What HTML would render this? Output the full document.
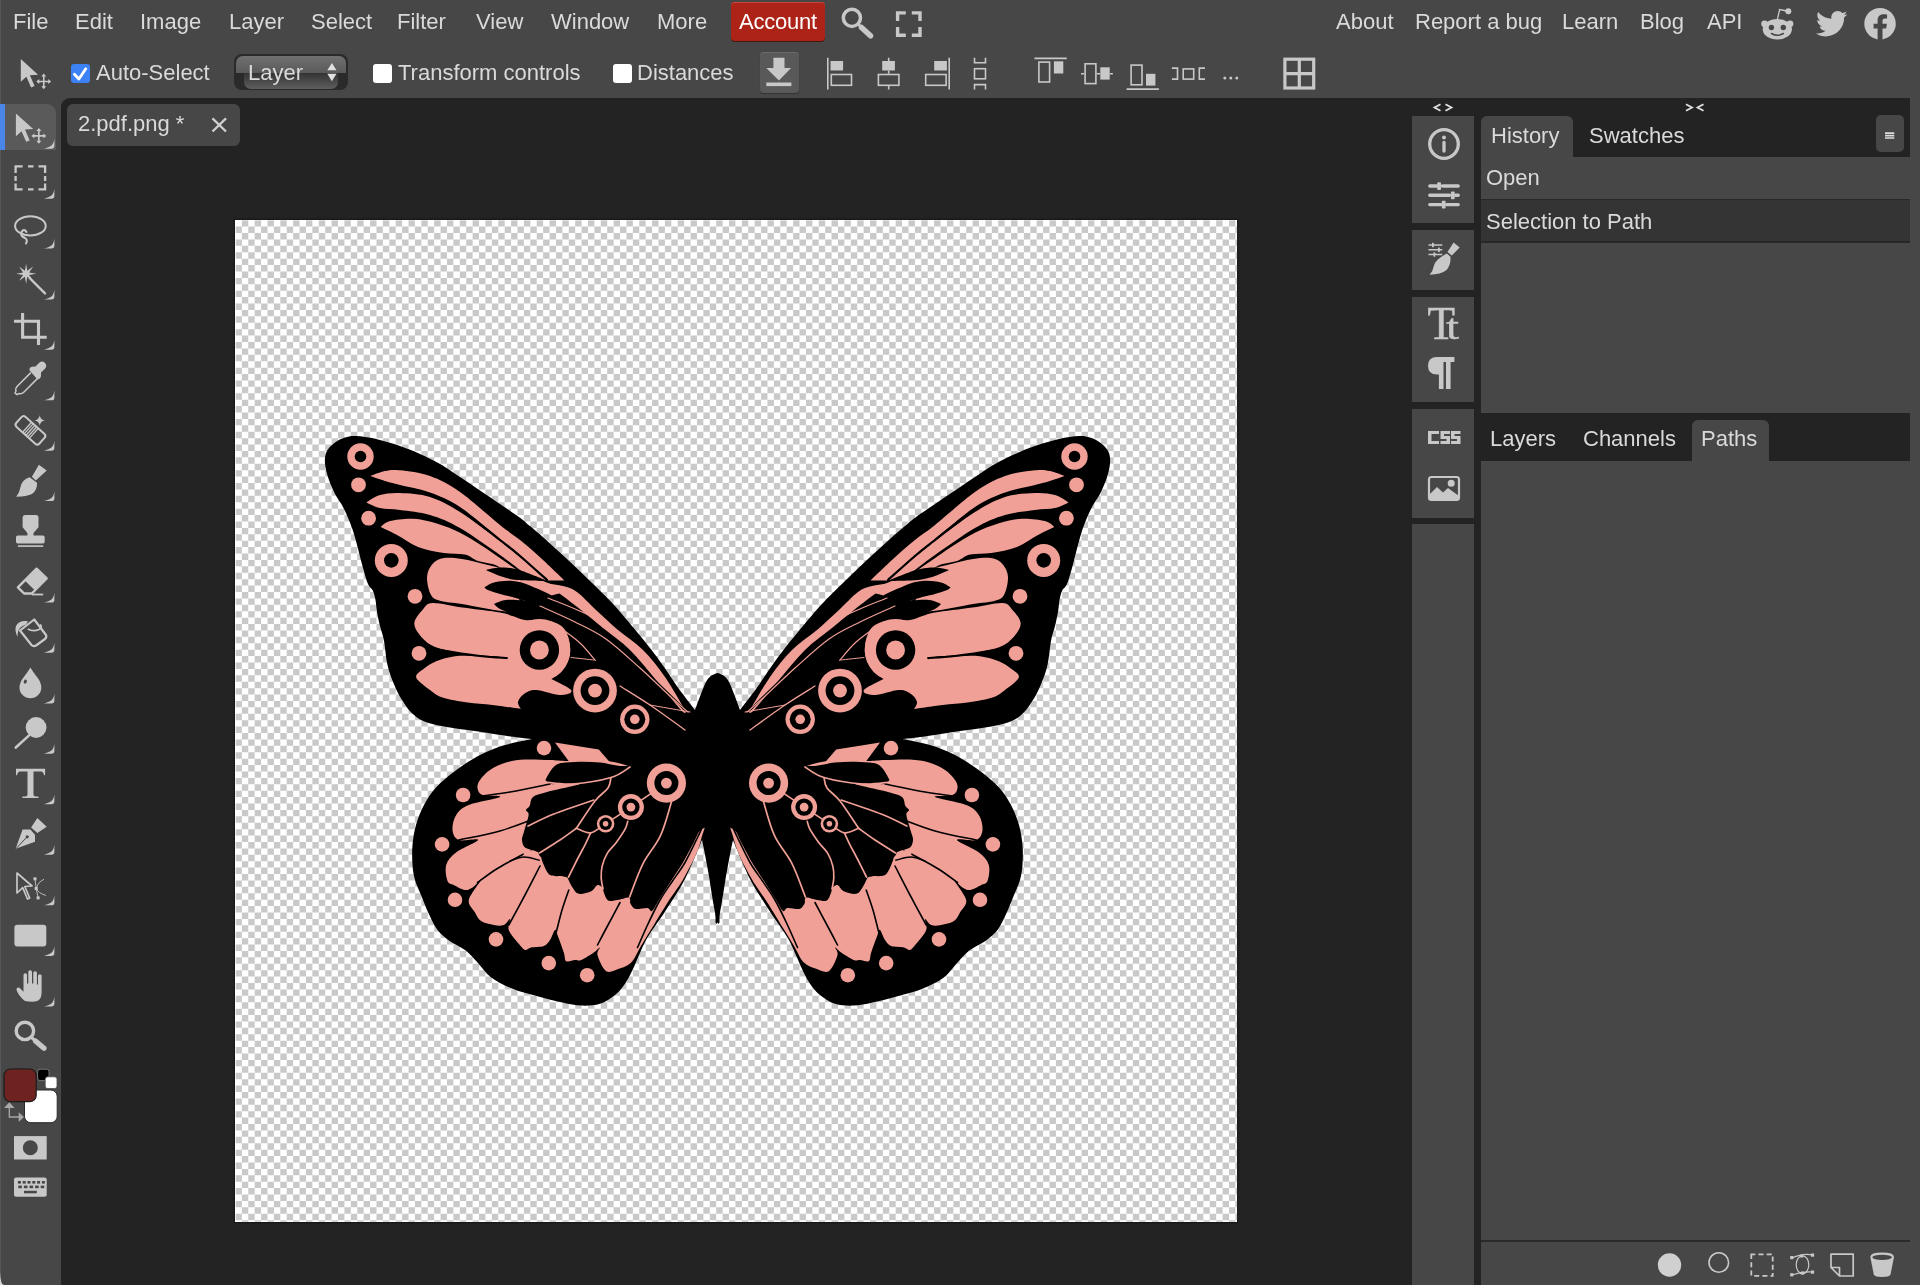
<!DOCTYPE html>
<html><head><meta charset="utf-8">
<style>
html,body{margin:0;padding:0;}
body{width:1920px;height:1285px;overflow:hidden;position:relative;background:#474747;font-family:"Liberation Sans",sans-serif;color:#d8d8d8;}
.a{position:absolute;}
.t{position:absolute;font-size:22px;line-height:22px;white-space:nowrap;color:#dadada;will-change:transform;}
.ic{position:absolute;fill:#c8c8c8;stroke:none;}
</style></head><body>
<!-- dark doc area -->
<div class="a" style="left:61px;top:98px;width:1849px;height:1187px;background:#232323;border-top-left-radius:9px;"></div>
<div class="a" style="left:0;top:0;width:1px;height:1285px;background:#575757;"></div>

<!-- MENU -->
<div class="t" style="left:13px;top:11px">File</div>
<div class="t" style="left:75px;top:11px">Edit</div>
<div class="t" style="left:140px;top:11px">Image</div>
<div class="t" style="left:229px;top:11px">Layer</div>
<div class="t" style="left:311px;top:11px">Select</div>
<div class="t" style="left:397px;top:11px">Filter</div>
<div class="t" style="left:476px;top:11px">View</div>
<div class="t" style="left:551px;top:11px">Window</div>
<div class="t" style="left:657px;top:11px">More</div>
<div class="a" style="left:731px;top:2px;width:94px;height:38.5px;background:#ae2318;border-radius:4px;box-shadow:0 1px 0 #3e1a16, inset 0 1px 0 #c9453a;"></div>
<div class="t" style="left:739px;top:11px;color:#fff;letter-spacing:-0.25px">Account</div>
<div class="t" style="left:1336px;top:11px">About</div>
<div class="t" style="left:1415px;top:11px">Report a bug</div>
<div class="t" style="left:1562px;top:11px">Learn</div>
<div class="t" style="left:1640px;top:11px">Blog</div>
<div class="t" style="left:1707px;top:11px">API</div>

<!-- TOOLBAR ROW -->
<div class="a" style="left:71px;top:64px;width:19px;height:19px;background:#3d82f5;border-radius:3px;"></div>
<div class="t" style="left:96px;top:61.5px">Auto-Select</div>
<div class="a" style="left:234px;top:54px;width:114px;height:36px;background:#2a2a2a;border-radius:8px;"></div><div class="a" style="left:236px;top:55.5px;width:110px;height:17px;background:linear-gradient(#707070,#5a5a5a);border-radius:7px 7px 0 0;"></div><div class="a" style="left:244px;top:72.5px;width:94px;height:16.5px;background:linear-gradient(#333,#5e5e5e);border-radius:0 0 7px 7px;"></div>
<div class="t" style="left:247.5px;top:61.5px">Layer</div>
<div class="a" style="left:373px;top:64px;width:19px;height:19px;background:#fff;border-radius:3px;"></div>
<div class="t" style="left:398px;top:61.5px">Transform controls</div>
<div class="a" style="left:613px;top:64px;width:19px;height:19px;background:#fff;border-radius:3px;"></div>
<div class="t" style="left:637px;top:61.5px">Distances</div>
<div class="a" style="left:760px;top:52px;width:39px;height:41px;background:#595959;border-radius:4px;box-shadow:0 1px 1px #333, inset 0 1px 0 #6a6a6a;"></div>

<!-- TOOL PANEL selection -->
<div class="a" style="left:0;top:104px;width:5px;height:46px;background:#4a86e8;"></div>
<div class="a" style="left:5px;top:104px;width:51px;height:46px;background:#5a5a5a;border-radius:0 9px 0 0;"></div>

<!-- DOC TAB -->
<div class="a" style="left:67px;top:104px;width:173px;height:42px;background:#474747;border-radius:6px;"></div>
<div class="t" style="left:78px;top:113px">2.pdf.png *</div>

<!-- CANVAS -->
<div class="a" style="left:234.4px;top:219.2px;width:1003.8px;height:1003.6px;background:#181818;box-shadow:0 0 1.5px #1a1a1a;"></div>
<div class="a" style="left:235.45px;top:220.2px;width:1001.8px;height:1001.6px;background:#fff;"></div>

<!--BFLY--><svg class="a" style="left:0;top:0" width="1920" height="1285" viewBox="0 0 1920 1285"><defs><clipPath id="cvc"><rect x="235.45" y="220.20" width="1001.8" height="1001.6"/></clipPath></defs><g clip-path="url(#cvc)" stroke="#c9c9c9" stroke-width="6.41" stroke-dasharray="6.41 6.41" fill="none"><path d="M241.86 223.41 H1237.25 M241.86 236.22 H1237.25 M241.86 249.04 H1237.25 M241.86 261.87 H1237.25 M241.86 274.69 H1237.25 M241.86 287.50 H1237.25 M241.86 300.32 H1237.25 M241.86 313.14 H1237.25 M241.86 325.96 H1237.25 M241.86 338.78 H1237.25 M241.86 351.61 H1237.25 M241.86 364.42 H1237.25 M241.86 377.25 H1237.25 M241.86 390.06 H1237.25 M241.86 402.88 H1237.25 M241.86 415.70 H1237.25 M241.86 428.52 H1237.25 M241.86 441.35 H1237.25 M241.86 454.16 H1237.25 M241.86 466.99 H1237.25 M241.86 479.81 H1237.25 M241.86 492.62 H1237.25 M241.86 505.44 H1237.25 M241.86 518.26 H1237.25 M241.86 531.09 H1237.25 M241.86 543.90 H1237.25 M241.86 556.73 H1237.25 M241.86 569.55 H1237.25 M241.86 582.37 H1237.25 M241.86 595.18 H1237.25 M241.86 608.00 H1237.25 M241.86 620.83 H1237.25 M241.86 633.64 H1237.25 M241.86 646.46 H1237.25 M241.86 659.29 H1237.25 M241.86 672.11 H1237.25 M241.86 684.92 H1237.25 M241.86 697.75 H1237.25 M241.86 710.57 H1237.25 M241.86 723.38 H1237.25 M241.86 736.20 H1237.25 M241.86 749.03 H1237.25 M241.86 761.85 H1237.25 M241.86 774.66 H1237.25 M241.86 787.48 H1237.25 M241.86 800.31 H1237.25 M241.86 813.12 H1237.25 M241.86 825.94 H1237.25 M241.86 838.77 H1237.25 M241.86 851.59 H1237.25 M241.86 864.40 H1237.25 M241.86 877.22 H1237.25 M241.86 890.05 H1237.25 M241.86 902.87 H1237.25 M241.86 915.68 H1237.25 M241.86 928.51 H1237.25 M241.86 941.33 H1237.25 M241.86 954.14 H1237.25 M241.86 966.96 H1237.25 M241.86 979.79 H1237.25 M241.86 992.61 H1237.25 M241.86 1005.42 H1237.25 M241.86 1018.25 H1237.25 M241.86 1031.07 H1237.25 M241.86 1043.88 H1237.25 M241.86 1056.70 H1237.25 M241.86 1069.53 H1237.25 M241.86 1082.35 H1237.25 M241.86 1095.16 H1237.25 M241.86 1107.98 H1237.25 M241.86 1120.81 H1237.25 M241.86 1133.62 H1237.25 M241.86 1146.44 H1237.25 M241.86 1159.27 H1237.25 M241.86 1172.09 H1237.25 M241.86 1184.90 H1237.25 M241.86 1197.72 H1237.25 M241.86 1210.55 H1237.25 M241.86 1223.37 H1237.25"/><path d="M235.45 229.81 H1237.25 M235.45 242.63 H1237.25 M235.45 255.45 H1237.25 M235.45 268.27 H1237.25 M235.45 281.09 H1237.25 M235.45 293.91 H1237.25 M235.45 306.74 H1237.25 M235.45 319.56 H1237.25 M235.45 332.38 H1237.25 M235.45 345.19 H1237.25 M235.45 358.01 H1237.25 M235.45 370.83 H1237.25 M235.45 383.65 H1237.25 M235.45 396.48 H1237.25 M235.45 409.29 H1237.25 M235.45 422.12 H1237.25 M235.45 434.94 H1237.25 M235.45 447.75 H1237.25 M235.45 460.57 H1237.25 M235.45 473.39 H1237.25 M235.45 486.21 H1237.25 M235.45 499.03 H1237.25 M235.45 511.86 H1237.25 M235.45 524.67 H1237.25 M235.45 537.50 H1237.25 M235.45 550.32 H1237.25 M235.45 563.13 H1237.25 M235.45 575.95 H1237.25 M235.45 588.77 H1237.25 M235.45 601.60 H1237.25 M235.45 614.41 H1237.25 M235.45 627.24 H1237.25 M235.45 640.06 H1237.25 M235.45 652.88 H1237.25 M235.45 665.69 H1237.25 M235.45 678.51 H1237.25 M235.45 691.34 H1237.25 M235.45 704.15 H1237.25 M235.45 716.98 H1237.25 M235.45 729.80 H1237.25 M235.45 742.62 H1237.25 M235.45 755.43 H1237.25 M235.45 768.26 H1237.25 M235.45 781.08 H1237.25 M235.45 793.89 H1237.25 M235.45 806.71 H1237.25 M235.45 819.54 H1237.25 M235.45 832.36 H1237.25 M235.45 845.17 H1237.25 M235.45 857.99 H1237.25 M235.45 870.82 H1237.25 M235.45 883.63 H1237.25 M235.45 896.45 H1237.25 M235.45 909.28 H1237.25 M235.45 922.10 H1237.25 M235.45 934.91 H1237.25 M235.45 947.73 H1237.25 M235.45 960.56 H1237.25 M235.45 973.38 H1237.25 M235.45 986.19 H1237.25 M235.45 999.02 H1237.25 M235.45 1011.84 H1237.25 M235.45 1024.65 H1237.25 M235.45 1037.47 H1237.25 M235.45 1050.30 H1237.25 M235.45 1063.12 H1237.25 M235.45 1075.93 H1237.25 M235.45 1088.76 H1237.25 M235.45 1101.58 H1237.25 M235.45 1114.39 H1237.25 M235.45 1127.21 H1237.25 M235.45 1140.04 H1237.25 M235.45 1152.86 H1237.25 M235.45 1165.67 H1237.25 M235.45 1178.50 H1237.25 M235.45 1191.32 H1237.25 M235.45 1204.13 H1237.25 M235.45 1216.95 H1237.25"/></g><g id="bh"><path d="M719.5 673.5 C719.5 673.5 718.8 673.2 717.5 673.5 C716.2 673.8 713.4 674.1 711.5 675.5 C709.6 676.9 707.8 678.8 706.0 682.0 C704.2 685.2 702.4 690.3 700.6 695.0 C698.8 699.7 695.0 710.0 695.0 710.0 C695.0 710.0 684.2 696.2 679.0 689.0 C673.8 681.8 668.8 673.8 664.0 667.0 C659.2 660.2 654.5 653.8 650.0 648.0 C645.5 642.2 643.0 639.2 637.0 632.0 C631.0 624.8 621.8 613.5 614.0 605.0 C606.2 596.5 597.8 588.7 590.0 581.0 C582.2 573.3 574.5 566.0 567.0 559.0 C559.5 552.0 551.2 544.5 545.0 539.0 C538.8 533.5 534.2 529.6 530.0 526.1 C525.8 522.6 525.0 521.4 520.0 517.7 C515.0 514.0 510.0 510.8 500.0 504.0 C490.0 497.2 470.0 483.7 460.0 477.0 C450.0 470.3 446.7 467.8 440.0 464.0 C433.3 460.2 426.7 457.0 420.0 454.0 C413.3 451.0 407.3 448.5 400.0 446.0 C392.7 443.5 383.3 440.7 376.0 439.0 C368.7 437.3 361.2 436.2 356.0 436.0 C350.8 435.8 348.5 436.4 345.0 437.5 C341.5 438.6 337.9 440.4 335.0 442.5 C332.1 444.6 329.2 447.4 327.5 450.0 C325.8 452.6 325.3 455.0 325.0 458.0 C324.7 461.0 324.9 464.3 325.6 468.0 C326.3 471.7 327.4 475.7 329.0 480.0 C330.6 484.3 332.8 489.7 335.0 494.0 C337.2 498.3 340.0 501.2 342.5 506.0 C345.0 510.8 347.9 517.2 350.0 522.5 C352.1 527.8 353.5 532.5 355.0 537.5 C356.5 542.5 357.7 547.4 359.0 552.5 C360.3 557.6 361.5 562.8 363.0 568.0 C364.5 573.2 366.3 580.2 368.0 584.0 C369.7 587.8 371.8 588.3 373.0 591.0 C374.2 593.7 374.8 596.5 375.5 600.0 C376.2 603.5 376.2 607.7 377.0 612.0 C377.8 616.3 378.8 621.2 380.0 626.0 C381.2 630.8 382.8 634.5 384.0 641.0 C385.2 647.5 385.9 657.9 387.5 665.0 C389.1 672.1 391.5 678.1 393.8 683.8 C396.0 689.4 398.3 694.0 401.2 698.8 C404.2 703.5 407.5 708.8 411.2 712.5 C415.0 716.2 418.5 719.0 423.8 721.2 C429.0 723.5 435.2 724.8 442.5 726.2 C449.8 727.7 459.2 728.8 467.5 730.0 C475.8 731.2 484.2 732.5 492.5 733.8 C500.8 735.0 510.8 736.6 517.5 737.5 C524.2 738.4 532.5 739.0 532.5 739.0 C532.5 739.0 513.8 742.3 505.0 745.0 C496.2 747.7 488.3 750.7 480.0 755.0 C471.7 759.3 462.3 765.6 455.0 771.0 C447.7 776.4 441.2 781.8 436.0 787.5 C430.8 793.2 427.3 798.8 424.0 805.0 C420.7 811.2 417.9 818.3 416.0 825.0 C414.1 831.7 413.1 838.3 412.5 845.0 C411.9 851.7 412.1 859.2 412.5 865.0 C412.9 870.8 413.6 875.0 415.0 880.0 C416.4 885.0 418.7 889.4 421.0 895.0 C423.3 900.6 426.0 907.9 428.8 913.8 C431.5 919.6 434.0 925.4 437.5 930.0 C441.0 934.6 445.4 937.9 450.0 941.2 C454.6 944.6 460.4 946.5 465.0 950.0 C469.6 953.5 473.1 957.9 477.5 962.5 C481.9 967.1 485.4 973.1 491.2 977.5 C497.1 981.9 504.8 985.6 512.5 988.8 C520.2 991.9 529.2 994.0 537.5 996.2 C545.8 998.5 555.2 1000.9 562.5 1002.5 C569.8 1004.1 575.0 1005.4 581.2 1005.6 C587.5 1005.8 594.4 1005.5 600.0 1003.8 C605.6 1002.0 610.8 998.3 615.0 995.0 C619.2 991.7 622.1 987.9 625.0 983.8 C627.9 979.6 630.0 975.1 632.5 970.0 C635.0 964.9 637.5 958.4 640.0 953.0 C642.5 947.6 643.2 944.7 647.5 937.5 C651.8 930.3 659.8 919.8 666.0 910.0 C672.2 900.2 679.0 890.7 685.0 879.0 C691.0 867.3 702.0 840.0 702.0 840.0 C702.0 840.0 703.4 846.2 704.5 852.0 C705.6 857.8 707.2 866.0 708.8 875.0 C710.3 884.0 712.3 898.1 713.8 906.0 C715.2 913.9 716.5 919.8 717.5 922.5 C718.5 925.2 719.5 922.5 719.5 922.5 C719.5 922.5 719.5 673.5 719.5 673.5Z" fill="#000"/>
<path d="M370.5 476.0 C370.5 476.0 380.1 471.9 385.0 471.0 C389.9 470.1 392.5 469.5 400.0 470.3 C407.5 471.1 420.0 472.4 430.0 476.0 C440.0 479.6 448.3 483.8 460.0 492.0 C471.7 500.2 490.0 517.0 500.0 525.0 C510.0 533.0 512.8 534.2 520.0 540.0 C527.2 545.8 535.6 553.2 543.0 560.0 C550.4 566.8 564.5 580.5 564.5 580.5 C564.5 580.5 548.0 580.5 548.0 580.5 C548.0 580.5 528.0 561.9 520.0 555.0 C512.0 548.1 510.0 547.0 500.0 539.0 C490.0 531.0 471.7 514.8 460.0 507.0 C448.3 499.2 440.0 496.2 430.0 492.5 C420.0 488.8 407.5 486.9 400.0 485.0 C392.5 483.1 389.9 482.5 385.0 481.0 C380.1 479.5 370.5 476.0 370.5 476.0Z" fill="#f0a096"/>
<path d="M366.5 502.5 C366.5 502.5 374.4 496.6 380.0 495.0 C385.6 493.4 391.7 492.7 400.0 493.0 C408.3 493.3 420.0 493.8 430.0 497.0 C440.0 500.2 448.3 504.7 460.0 512.0 C471.7 519.3 490.0 533.5 500.0 541.0 C510.0 548.5 512.0 550.4 520.0 557.0 C528.0 563.6 548.0 580.5 548.0 580.5 C548.0 580.5 534.7 578.8 530.0 577.0 C525.3 575.2 525.0 573.7 520.0 570.0 C515.0 566.3 510.0 562.0 500.0 555.0 C490.0 548.0 471.7 534.7 460.0 528.0 C448.3 521.3 440.0 518.0 430.0 515.0 C420.0 512.0 408.3 511.2 400.0 510.0 C391.7 508.8 385.6 509.2 380.0 508.0 C374.4 506.8 366.5 502.5 366.5 502.5Z" fill="#f0a096"/>
<path d="M380.7 527.0 C380.7 527.0 384.6 522.4 390.0 521.0 C395.4 519.6 405.6 518.3 413.4 518.7 C421.2 519.1 429.0 521.1 436.8 523.4 C444.6 525.7 452.3 528.8 460.1 532.7 C467.9 536.6 476.5 542.3 483.5 546.8 C490.5 551.3 495.6 555.2 502.0 559.6 C508.4 564.0 514.5 568.3 522.0 573.0 C529.5 577.7 547.3 586.5 547.0 588.0 C546.7 589.5 528.2 585.7 520.0 582.0 C511.8 578.3 504.5 569.5 497.5 566.0 C490.5 562.5 483.4 562.9 478.0 561.0 C472.6 559.1 470.5 555.8 464.8 554.5 C459.1 553.2 451.6 554.2 443.8 553.0 C436.0 551.8 425.8 550.0 418.0 547.0 C410.2 544.0 403.2 538.3 397.0 535.0 C390.8 531.7 380.7 527.0 380.7 527.0Z" fill="#f0a096"/>
<path d="M543.9 583.0 C543.9 583.0 557.5 584.5 563.0 586.0 C568.5 587.5 571.5 588.0 577.0 592.0 C582.5 596.0 589.2 603.7 596.0 610.0 C602.8 616.3 610.2 623.3 618.0 630.0 C625.8 636.7 635.2 642.2 643.0 650.0 C650.8 657.8 657.8 666.7 665.0 677.0 C672.2 687.3 686.0 712.0 686.0 712.0 C686.0 712.0 686.0 715.3 681.0 710.0 C676.0 704.7 664.5 690.0 656.0 680.0 C647.5 670.0 638.8 658.7 630.0 650.0 C621.2 641.3 611.2 634.7 603.0 628.0 C594.8 621.3 588.8 616.2 581.0 610.0 C573.2 603.8 562.2 595.5 556.0 591.0 C549.8 586.5 543.9 583.0 543.9 583.0Z" fill="#f0a096"/>
<path d="M427.0 577.0 C427.2 571.8 429.7 567.2 432.5 564.0 C435.3 560.8 439.1 558.8 444.0 558.0 C448.9 557.2 454.7 557.8 462.0 559.0 C469.3 560.2 478.3 562.7 488.0 565.0 C497.7 567.3 510.0 570.0 520.0 573.0 C530.0 576.0 540.5 579.8 548.0 583.0 C555.5 586.2 565.0 592.0 565.0 592.0 C565.0 592.0 551.7 595.0 545.0 598.0 C538.3 601.0 532.2 607.8 525.0 610.0 C517.8 612.2 512.5 612.0 502.0 611.0 C491.5 610.0 472.2 605.7 462.0 604.0 C451.8 602.3 446.2 602.5 441.0 601.0 C435.8 599.5 433.3 599.0 431.0 595.0 C428.7 591.0 426.8 582.2 427.0 577.0Z" fill="#f0a096"/>
<path d="M414.4 622.5 C415.0 618.5 419.5 613.2 422.5 610.0 C425.5 606.8 425.8 603.4 432.5 603.0 C439.2 602.6 451.2 605.9 462.5 607.5 C473.8 609.1 491.7 611.1 500.0 612.5 C508.3 613.9 508.3 614.8 512.5 616.0 C516.7 617.2 519.8 619.3 525.0 620.0 C530.2 620.7 538.2 619.2 544.0 620.0 C549.8 620.8 556.1 622.5 560.0 625.0 C563.9 627.5 565.8 630.8 567.5 635.0 C569.2 639.2 570.2 645.0 570.0 650.0 C569.8 655.0 568.3 660.7 566.0 665.0 C563.7 669.3 560.3 673.1 556.0 676.0 C551.7 678.9 545.2 681.8 540.0 682.5 C534.8 683.2 530.7 683.9 525.0 680.0 C519.3 676.1 514.3 663.2 506.0 659.0 C497.7 654.8 484.3 656.3 475.0 655.0 C465.7 653.7 457.3 652.7 450.0 651.0 C442.7 649.3 436.2 647.8 431.0 645.0 C425.8 642.2 421.8 637.8 419.0 634.0 C416.2 630.2 413.8 626.5 414.4 622.5Z" fill="#f0a096"/>
<circle cx="539.4" cy="650.0" r="31.0" fill="#f0a096"/>
<path d="M416.2 677.5 C415.2 674.0 420.4 671.5 423.8 668.8 C427.1 666.0 431.0 663.3 436.2 661.2 C441.5 659.2 447.7 657.1 455.0 656.2 C462.3 655.4 471.7 655.8 480.0 656.2 C488.3 656.7 497.5 656.8 505.0 658.8 C512.5 660.7 518.3 665.1 525.0 668.0 C531.7 670.9 537.3 672.3 545.0 676.0 C552.7 679.7 568.5 686.8 571.0 690.0 C573.5 693.2 565.8 695.0 560.0 695.0 C554.2 695.0 542.0 690.2 536.0 690.0 C530.0 689.8 527.0 692.0 524.0 694.0 C521.0 696.0 518.5 699.5 518.0 702.0 C517.5 704.5 521.0 709.0 521.0 709.0 C521.0 709.0 501.4 706.1 492.5 705.0 C483.6 703.9 475.8 703.8 467.5 702.5 C459.2 701.2 448.8 699.6 442.5 697.5 C436.2 695.4 434.4 693.3 430.0 690.0 C425.6 686.7 417.3 681.0 416.2 677.5Z" fill="#f0a096"/>
<path d="M405.0 643.0 C410.8 644.2 427.5 647.8 440.0 650.0 C452.5 652.2 468.8 654.7 480.0 656.0 C491.2 657.3 502.5 657.7 507.0 658.0" fill="none" stroke="#000" stroke-width="1.8" stroke-linecap="round"/>
<path d="M486.0 570.0 C486.0 570.0 494.5 567.5 500.0 567.5 C505.5 567.5 511.1 567.8 519.0 570.0 C526.9 572.2 547.5 581.0 547.5 581.0 C547.5 581.0 525.4 580.8 517.5 580.0 C509.6 579.2 505.2 577.7 500.0 576.0 C494.8 574.3 486.0 570.0 486.0 570.0Z" fill="#000"/>
<path d="M484.5 587.5 C484.5 587.5 489.3 583.6 494.0 582.5 C498.7 581.4 506.3 580.4 512.5 581.0 C518.7 581.6 522.7 582.4 531.0 586.0 C539.3 589.6 550.6 593.7 562.5 602.5 C574.4 611.3 602.5 639.0 602.5 639.0 C602.5 639.0 589.8 639.0 581.0 635.0 C572.2 631.0 559.3 620.7 550.0 615.0 C540.7 609.3 533.3 604.5 525.0 601.0 C516.7 597.5 506.2 595.8 500.0 594.0 C493.8 592.2 490.6 591.1 488.0 590.0 C485.4 588.9 484.5 587.5 484.5 587.5Z" fill="#000"/>
<path d="M494.0 604.0 C494.0 604.0 500.8 600.5 506.0 600.0 C511.2 599.5 517.7 600.3 525.0 601.0 C532.3 601.7 541.7 602.2 550.0 604.0 C558.3 605.8 573.3 609.8 575.0 612.0 C576.7 614.2 565.8 615.9 560.0 617.0 C554.2 618.1 545.8 618.2 540.0 618.5 C534.2 618.8 529.6 619.8 525.0 619.0 C520.4 618.2 516.7 615.7 512.5 614.0 C508.3 612.3 503.1 610.7 500.0 609.0 C496.9 607.3 494.0 604.0 494.0 604.0Z" fill="#000"/>
<path d="M395.0 490.0 C400.8 490.8 419.2 491.2 430.0 494.5 C440.8 497.8 448.3 501.9 460.0 509.5 C471.7 517.1 490.0 532.2 500.0 540.0 C510.0 547.8 512.2 549.3 520.0 556.0 C527.8 562.7 542.5 576.0 547.0 580.0" fill="none" stroke="#000" stroke-width="2.2" stroke-linecap="round"/>
<path d="M520.0 600.0 C526.7 603.0 546.7 611.5 560.0 618.0 C573.3 624.5 586.7 630.8 600.0 639.0 C613.3 647.2 625.0 654.3 640.0 667.0 C655.0 679.7 681.7 707.0 690.0 715.0" fill="none" stroke="#000" stroke-width="2.0" stroke-linecap="round"/>
<circle cx="360.5" cy="456.5" r="13.2" fill="#f0a096"/>
<circle cx="360.5" cy="456.5" r="5.8" fill="#000"/>
<circle cx="391.3" cy="560.4" r="16.5" fill="#f0a096"/>
<circle cx="391.3" cy="560.4" r="7.3" fill="#000"/>
<circle cx="358.5" cy="484.8" r="7.4" fill="#f0a096"/>
<circle cx="368.6" cy="518.2" r="7.4" fill="#f0a096"/>
<circle cx="415.0" cy="596.3" r="7.4" fill="#f0a096"/>
<circle cx="419.0" cy="653.3" r="7.4" fill="#f0a096"/>
<circle cx="539.4" cy="650.0" r="19.7" fill="#000"/>
<circle cx="539.4" cy="650.0" r="9.4" fill="#f0a096"/>
<circle cx="595.0" cy="690.6" r="21.9" fill="#f0a096"/>
<circle cx="595.0" cy="690.6" r="14.4" fill="#000"/>
<circle cx="595.0" cy="690.6" r="6.9" fill="#f0a096"/>
<circle cx="634.8" cy="719.3" r="14.7" fill="#f0a096"/>
<circle cx="634.8" cy="719.3" r="10.5" fill="#000"/>
<circle cx="634.8" cy="719.3" r="4.8" fill="#f0a096"/>
<path d="M620.0 686.0 C625.0 689.2 639.2 697.7 650.0 705.0 C660.8 712.3 679.2 725.8 685.0 730.0" fill="none" stroke="#f0a096" stroke-width="1.3" stroke-linecap="round"/>
<path d="M540.0 606.0 C545.8 608.7 564.0 616.5 575.0 622.0 C586.0 627.5 595.2 631.3 606.0 639.0 C616.8 646.7 629.0 658.2 640.0 668.0 C651.0 677.8 664.0 690.7 672.0 698.0 C680.0 705.3 685.3 709.7 688.0 712.0" fill="none" stroke="#f0a096" stroke-width="1.2" stroke-linecap="round"/>
<path d="M562.5 629.4 C565.4 631.7 574.5 637.9 580.0 643.0 C585.5 648.1 592.8 657.4 595.3 660.3" fill="none" stroke="#f0a096" stroke-width="1.2" stroke-linecap="round"/>
<path d="M571.0 657.5 C574.8 657.9 590.2 659.6 594.0 660.0" fill="none" stroke="#f0a096" stroke-width="1.0" stroke-linecap="round"/>
<path d="M548.0 598.0 C555.0 601.0 577.2 609.0 590.0 616.0 C602.8 623.0 619.2 636.0 625.0 640.0" fill="none" stroke="#f0a096" stroke-width="1.1" stroke-linecap="round"/>
<path d="M650.0 705.0 C656.7 706.2 683.3 710.8 690.0 712.0" fill="none" stroke="#f0a096" stroke-width="1.0" stroke-linecap="round"/>
<path d="M555.0 742.5 L598.8 749.4 L611.2 763.8 L568.8 761.2Z" fill="#f0a096"/>
<path d="M567.5 761.0 C559.2 761.0 557.1 760.2 550.0 760.0 C542.9 759.8 532.3 759.1 525.0 759.5 C517.7 759.9 511.8 760.8 506.0 762.5 C500.2 764.2 494.3 767.1 490.0 770.0 C485.7 772.9 482.1 777.0 480.0 780.0 C477.9 783.0 477.1 785.5 477.5 788.0 C477.9 790.5 478.8 793.5 482.5 795.0 C486.2 796.5 502.3 795.3 500.0 797.0 C497.7 798.7 476.0 802.0 468.8 805.0 C461.5 808.0 459.0 810.8 456.2 815.0 C453.5 819.2 452.1 825.8 452.5 830.0 C452.9 834.2 454.5 838.3 458.8 840.0 C463.0 841.7 478.5 837.9 478.0 840.0 C477.5 842.1 461.3 848.3 456.0 852.5 C450.7 856.7 447.7 860.2 446.2 865.0 C444.8 869.8 446.2 877.7 447.5 881.0 C448.8 884.3 450.8 883.5 453.8 885.0 C456.7 886.5 461.9 889.6 465.0 890.0 C468.1 890.4 469.8 889.2 472.5 887.5 C475.2 885.8 481.6 877.9 481.0 880.0 C480.4 882.1 469.8 894.6 468.8 900.0 C467.8 905.4 473.0 909.0 475.0 912.5 C477.0 916.0 477.9 918.9 481.0 921.0 C484.1 923.1 490.0 924.3 493.8 925.0 C497.5 925.7 501.0 926.0 503.8 925.0 C506.5 924.0 509.2 918.2 510.0 919.0 C510.8 919.8 507.3 925.9 508.8 930.0 C510.2 934.1 516.0 940.4 518.8 943.8 C521.5 947.1 523.0 949.4 525.0 950.0 C527.0 950.6 527.9 948.2 531.0 947.5 C534.1 946.8 540.6 947.2 543.8 946.0 C546.9 944.8 548.1 942.7 550.0 940.0 C551.9 937.3 553.8 930.8 555.0 930.0 C556.2 929.2 556.0 931.2 557.5 935.0 C559.0 938.8 562.3 948.1 563.8 952.5 C565.2 956.9 564.4 960.0 566.2 961.2 C568.1 962.5 572.5 960.2 575.0 960.0 C577.5 959.8 578.1 961.2 581.2 960.0 C584.4 958.8 590.6 954.6 593.8 952.5 C596.9 950.4 599.4 947.1 600.0 947.5 C600.6 947.9 596.5 951.0 597.5 955.0 C598.5 959.0 602.7 969.0 606.2 971.2 C609.8 973.5 614.6 970.2 618.8 968.8 C622.9 967.3 627.5 966.3 631.2 962.5 C635.0 958.7 637.5 951.8 641.0 946.0 C644.5 940.2 647.5 935.3 652.0 928.0 C656.5 920.7 662.5 910.7 668.0 902.0 C673.5 893.3 679.5 886.3 685.0 876.0 C690.5 865.7 698.0 852.7 701.0 840.0 C704.0 827.3 713.2 811.7 703.0 800.0 C692.8 788.3 657.2 776.7 640.0 770.0 C622.8 763.3 612.1 761.5 600.0 760.0 C587.9 758.5 575.8 761.0 567.5 761.0Z" fill="#f0a096"/>
<path d="M545.5 780.0 C545.5 780.0 551.1 768.0 556.0 765.0 C560.9 762.0 567.7 762.4 575.0 762.0 C582.3 761.6 591.7 761.8 600.0 762.5 C608.3 763.2 615.0 766.4 625.0 766.0 C635.0 765.6 645.5 759.3 660.0 760.0 C674.5 760.7 703.3 759.0 712.0 770.0 C720.7 781.0 712.0 826.0 712.0 826.0 C712.0 826.0 703.5 827.3 700.5 830.0 C697.5 832.7 696.9 836.6 694.0 842.0 C691.1 847.4 686.8 856.0 683.0 862.5 C679.2 869.0 675.0 874.8 671.0 881.0 C667.0 887.2 662.2 895.0 659.0 900.0 C655.8 905.0 653.9 909.7 652.0 911.0 C650.1 912.3 650.3 908.4 647.5 908.0 C644.7 907.6 637.9 909.7 635.0 908.8 C632.1 907.8 630.0 902.5 630.0 902.5 C630.0 902.5 630.8 897.9 628.8 897.5 C626.7 897.1 621.0 899.6 617.5 900.0 C614.0 900.4 610.0 902.1 607.5 900.0 C605.0 897.9 602.5 887.5 602.5 887.5 C602.5 887.5 599.4 884.4 597.5 885.0 C595.6 885.6 594.4 889.8 591.2 891.2 C588.1 892.7 581.9 894.4 578.8 893.8 C575.6 893.1 574.4 890.2 572.5 887.5 C570.6 884.8 567.5 877.5 567.5 877.5 C567.5 877.5 565.4 876.7 562.5 876.2 C559.6 875.8 553.1 876.9 550.0 875.0 C546.9 873.1 545.2 867.9 543.8 865.0 C542.3 862.1 541.2 857.5 541.2 857.5 C541.2 857.5 537.7 852.7 535.0 851.0 C532.3 849.3 527.2 849.3 525.0 847.5 C522.8 845.7 522.2 842.5 522.0 840.0 C521.8 837.5 522.6 836.7 523.8 832.5 C524.9 828.3 528.2 818.8 528.6 815.0 C529.0 811.2 525.8 811.5 526.0 810.0 C526.2 808.5 528.5 807.9 529.7 805.7 C530.9 803.5 530.1 799.3 533.0 797.0 C535.9 794.7 539.2 794.2 547.0 792.0 C554.8 789.8 577.8 785.3 580.0 784.0 C582.2 782.7 565.0 784.0 560.0 784.0 C555.0 784.0 552.4 784.4 550.0 783.8 C547.6 783.1 545.5 780.0 545.5 780.0Z" fill="#000"/>
<path d="M482.0 796.0 C486.7 795.3 498.7 794.0 510.0 792.0 C521.3 790.0 543.3 785.3 550.0 784.0" fill="none" stroke="#000" stroke-width="1.6" stroke-linecap="round"/>
<path d="M458.8 840.0 C465.6 838.5 486.9 834.8 500.0 831.0 C513.1 827.2 531.2 819.8 537.5 817.5" fill="none" stroke="#000" stroke-width="1.6" stroke-linecap="round"/>
<path d="M477.5 882.5 C480.4 880.4 489.2 873.8 495.0 870.0 C500.8 866.2 505.8 863.7 512.5 860.0 C519.2 856.3 531.2 850.0 535.0 848.0" fill="none" stroke="#000" stroke-width="1.6" stroke-linecap="round"/>
<path d="M508.8 925.0 C511.5 920.0 519.8 904.8 525.0 895.0 C530.2 885.2 537.5 870.8 540.0 866.0" fill="none" stroke="#000" stroke-width="1.6" stroke-linecap="round"/>
<path d="M556.2 932.5 C557.2 928.8 559.9 917.1 562.0 910.0 C564.1 902.9 567.6 893.3 568.8 890.0" fill="none" stroke="#000" stroke-width="1.6" stroke-linecap="round"/>
<path d="M597.5 945.0 C599.2 941.7 604.2 932.1 608.0 925.0 C611.8 917.9 618.0 906.2 620.0 902.5" fill="none" stroke="#000" stroke-width="1.6" stroke-linecap="round"/>
<path d="M702.0 828.0 C701.2 829.6 700.3 831.8 697.5 837.5 C694.7 843.2 689.2 855.2 685.0 862.5 C680.8 869.8 676.7 874.8 672.5 881.0 C668.3 887.2 664.2 892.7 660.0 900.0 C655.8 907.3 651.2 917.1 647.5 925.0 C643.8 932.9 639.2 943.8 637.5 947.5" fill="none" stroke="#000" stroke-width="1.6" stroke-linecap="round"/>
<circle cx="544.0" cy="748.1" r="7.3" fill="#f0a096"/>
<circle cx="463.1" cy="795.0" r="7.3" fill="#f0a096"/>
<circle cx="442.1" cy="844.4" r="7.3" fill="#f0a096"/>
<circle cx="455.0" cy="899.8" r="7.3" fill="#f0a096"/>
<circle cx="496.0" cy="939.4" r="7.3" fill="#f0a096"/>
<circle cx="548.8" cy="963.1" r="7.3" fill="#f0a096"/>
<circle cx="587.2" cy="975.2" r="7.3" fill="#f0a096"/>
<path d="M545.0 782.0 C549.6 782.3 561.5 784.8 572.5 784.0 C583.5 783.2 601.4 780.3 611.0 777.5 C620.6 774.7 626.8 768.8 630.0 767.0" fill="none" stroke="#f0a096" stroke-width="1.7" stroke-linecap="round"/>
<path d="M611.0 777.5 C610.5 779.2 610.7 784.1 608.0 788.0 C605.3 791.9 600.3 794.3 595.0 801.0 C589.7 807.7 579.5 823.8 576.4 828.3" fill="none" stroke="#f0a096" stroke-width="1.7" stroke-linecap="round"/>
<path d="M528.0 826.0 C532.3 824.0 542.8 818.3 553.8 814.0 C564.7 809.7 587.1 802.3 593.8 800.0" fill="none" stroke="#f0a096" stroke-width="1.7" stroke-linecap="round"/>
<path d="M576.4 828.3 C578.8 829.0 585.8 833.5 590.6 832.8 C595.4 832.1 602.8 825.4 605.2 823.9" fill="none" stroke="#f0a096" stroke-width="1.7" stroke-linecap="round"/>
<path d="M576.4 828.3 C573.7 830.2 566.2 835.9 560.0 840.0 C553.8 844.1 542.7 850.9 539.2 853.1" fill="none" stroke="#f0a096" stroke-width="1.7" stroke-linecap="round"/>
<path d="M605.6 823.8 C609.8 821.0 620.8 813.9 630.9 807.1 C641.0 800.3 660.5 787.1 666.4 783.1" fill="none" stroke="#f0a096" stroke-width="1.7" stroke-linecap="round"/>
<path d="M590.6 832.8 C589.7 834.7 587.6 839.8 585.3 844.3 C583.0 848.8 579.8 854.5 577.0 860.0 C574.2 865.5 569.9 874.2 568.5 877.0" fill="none" stroke="#f0a096" stroke-width="1.7" stroke-linecap="round"/>
<path d="M627.8 821.3 C627.3 822.6 627.0 825.7 625.1 829.2 C623.2 832.7 619.2 838.5 616.3 842.5 C613.3 846.5 609.8 849.1 607.4 853.1 C605.0 857.1 603.1 862.2 602.1 866.4 C601.1 870.5 601.1 874.2 601.2 878.0 C601.4 881.8 602.7 887.2 603.0 889.0" fill="none" stroke="#f0a096" stroke-width="1.7" stroke-linecap="round"/>
<path d="M672.0 800.0 C670.1 805.9 665.5 824.8 660.6 835.4 C655.8 846.0 648.1 853.5 642.9 863.8 C637.7 874.1 631.8 891.5 629.6 897.0" fill="none" stroke="#f0a096" stroke-width="1.7" stroke-linecap="round"/>
<path d="M523.0 848.5 L538.0 852.0 L540.5 860.0 L524.0 857.0Z" fill="#f0a096"/>
<path d="M510.0 861.0 C512.3 860.3 519.1 857.1 524.0 857.0 C528.9 856.9 536.7 859.7 539.2 860.2" fill="none" stroke="#000" stroke-width="1.5" stroke-linecap="round"/>
<circle cx="666.4" cy="783.1" r="19.6" fill="#f0a096"/>
<circle cx="666.4" cy="783.1" r="12.0" fill="#000"/>
<circle cx="666.4" cy="783.1" r="5.4" fill="#f0a096"/>
<circle cx="630.9" cy="807.1" r="13.0" fill="#f0a096"/>
<circle cx="630.9" cy="807.1" r="8.7" fill="#000"/>
<circle cx="630.9" cy="807.1" r="4.4" fill="#f0a096"/>
<circle cx="605.6" cy="823.8" r="8.8" fill="#f0a096"/>
<circle cx="605.6" cy="823.8" r="6.2" fill="#000"/>
<circle cx="605.6" cy="823.8" r="2.8" fill="#f0a096"/></g><use href="#bh" transform="translate(1435,0) scale(-1,1)"/></svg><!--/BFLY-->
<!-- RIGHT ICON COLUMN -->
<div class="a" style="left:1412px;top:116px;width:62px;height:107px;background:#474747;"></div>
<div class="a" style="left:1412px;top:230px;width:62px;height:60px;background:#474747;"></div>
<div class="a" style="left:1412px;top:297px;width:62px;height:105px;background:#474747;"></div>
<div class="a" style="left:1412px;top:409px;width:62px;height:109px;background:#474747;"></div>
<div class="a" style="left:1412px;top:524px;width:62px;height:761px;background:#474747;"></div>

<!-- RIGHT PANEL 1 -->
<div class="a" style="left:1481px;top:116px;width:92px;height:41px;background:#474747;border-radius:6px 6px 0 0;"></div>
<div class="a" style="left:1876px;top:115px;width:28px;height:37px;background:#474747;border-radius:5px;"></div>
<div class="a" style="left:1481px;top:157px;width:429px;height:256px;background:#474747;"></div>
<div class="a" style="left:1481px;top:198.5px;width:429px;height:44.5px;background:#343434;border-top:1px solid #282828;border-bottom:2px solid #282828;box-sizing:border-box;"></div>
<div class="t" style="left:1491px;top:125px">History</div>
<div class="t" style="left:1589px;top:125px">Swatches</div>
<div class="t" style="left:1486px;top:167px">Open</div>
<div class="t" style="left:1486px;top:211px">Selection to Path</div>

<!-- RIGHT PANEL 2 -->
<div class="a" style="left:1692px;top:420px;width:77px;height:42px;background:#474747;border-radius:6px 6px 0 0;"></div>
<div class="a" style="left:1481px;top:461px;width:429px;height:824px;background:#474747;"></div>
<div class="a" style="left:1481px;top:1240px;width:429px;height:2px;background:#2a2a2a;"></div>
<div class="t" style="left:1490px;top:428px">Layers</div>
<div class="t" style="left:1583px;top:428px">Channels</div>
<div class="t" style="left:1700.5px;top:428px">Paths</div>

<!--UI--><svg class="a" style="left:0;top:0" width="1920" height="1285" viewBox="0 0 1920 1285"><circle cx="851.9" cy="17.8" r="8.6" fill="none" stroke="#c8c8c8" stroke-width="3.5"/><path d="M858.5 24.5 L871 36" stroke="#c8c8c8" stroke-width="3" stroke-linecap="round"/><path d="M861.5 27.5 L870.5 35.8" stroke="#c8c8c8" stroke-width="5.5" stroke-linecap="round"/><path d="M897.6 21 V12.9 H905.8 M911.8 12.9 H920 V21 M920 27 V35.3 H911.8 M905.8 35.3 H897.6 V27" fill="none" stroke="#c8c8c8" stroke-width="3.4"/><g fill="#c8c8c8"><ellipse cx="1777.3" cy="29.3" rx="14.6" ry="10.3"/><circle cx="1764.6" cy="23.8" r="3.4"/><circle cx="1790" cy="23.8" r="3.4"/><circle cx="1788.3" cy="11.3" r="3"/></g><path d="M1777.4 19.5 L1779.6 9.5 L1787 11" fill="none" stroke="#c8c8c8" stroke-width="1.3"/><g fill="#474747"><circle cx="1771.4" cy="27.5" r="2.7"/><circle cx="1783.3" cy="27.5" r="2.7"/></g><path d="M1771.5 33.5 Q1777.4 37 1783.3 33.5" fill="none" stroke="#474747" stroke-width="1.5" stroke-linecap="round"/><path transform="translate(1816,8) scale(0.0612)" fill="#c8c8c8" d="M459.37 151.716c.325 4.548.325 9.097.325 13.645 0 138.72-105.583 298.558-298.558 298.558-59.452 0-114.68-17.219-161.137-47.106 8.447.974 16.568 1.299 25.34 1.299 49.055 0 94.213-16.568 130.274-44.832-46.132-.975-84.792-31.188-98.112-72.772 6.498.974 12.995 1.624 19.818 1.624 9.421 0 18.843-1.3 27.614-3.573-48.081-9.747-84.143-51.98-84.143-102.985v-1.299c13.969 7.797 30.214 12.67 47.431 13.319-28.264-18.843-46.781-51.005-46.781-87.391 0-19.492 5.197-37.36 14.294-52.954 51.655 63.675 129.3 105.258 216.365 109.807-1.624-7.797-2.599-15.918-2.599-24.04 0-57.828 46.782-104.934 104.934-104.934 30.213 0 57.502 12.67 76.67 33.137 23.715-4.548 46.456-13.32 66.599-25.34-7.798 24.366-22.665 44.833-42.158 58.802 18.843-1.624 37.36-6.822 54.578-14.294-12.992 18.843-29.237 35.735-47.754 49.704z"/><path transform="translate(1863.8,7.6) scale(0.0635)" fill="#c8c8c8" d="M504 256C504 119 393 8 256 8S8 119 8 256c0 123.78 90.69 226.38 209.25 245V327.69h-63V256h63v-54.64c0-62.15 37-96.48 93.67-96.48 27.14 0 55.52 4.84 55.52 4.84v61h-31.28c-30.8 0-40.410 19.12-40.41 38.73V256h68.78l-11 71.69h-57.78V501C413.31 482.38 504 379.78 504 256z"/><g transform="translate(0,0)" fill="#c8c8c8"><path d="M20.8 59 L38.1 74.7 L29.9 75.2 L34.6 86 L31.1 87.4 L26.4 76.8 L20.8 81.8Z"/><path d="M43.75 75 V88 M37.5 81.5 H50" stroke="#c8c8c8" stroke-width="1.6"/><path d="M43.75 73.6 L41.3 76.6 H46.2Z M43.75 89.3 L41.3 86.3 H46.2Z M36.3 81.5 L39.3 79.1 V83.9Z M51.2 81.5 L48.2 79.1 V83.9Z"/></g><path d="M74.4 74.2 L78.9 79 L85.8 68.8" fill="none" stroke="#fff" stroke-width="2.8" stroke-linecap="round" stroke-linejoin="round"/><path d="M331.9 62.9 L336.5 70.3 H327.3Z M331.9 81.3 L336.5 73.8 H327.3Z" fill="#e0e0e0"/><path d="M773.4 57.7 H784.5 V68.1 H791 L778.9 80.5 L766.3 68.1 H773.4Z" fill="#c8c8c8"/><rect x="766.3" y="82.5" width="25.1" height="3.6" fill="#c8c8c8"/><g fill="none" stroke="#c8c8c8" stroke-width="1.6"><path d="M827.8 57.7 V89.6"/><rect x="831.3" y="74.5" width="20.2" height="10.8"/></g><rect x="830.5" y="61" width="12.6" height="9.5" fill="#c8c8c8"/><g fill="none" stroke="#c8c8c8" stroke-width="1.6"><path d="M888.7 57.7 V61 M888.7 70.5 V73.7 M888.7 86 V89.6"/><rect x="878.4" y="74.5" width="20.5" height="10.8"/></g><rect x="882.2" y="61" width="12.7" height="9.5" fill="#c8c8c8"/><g fill="none" stroke="#c8c8c8" stroke-width="1.6"><path d="M949.2 57.7 V89.6"/><rect x="925.7" y="74.5" width="20.4" height="10.8"/></g><rect x="934.2" y="61" width="12.7" height="9.5" fill="#c8c8c8"/><g fill="none" stroke="#c8c8c8" stroke-width="1.6"><path d="M974.5 57.7 V62.8 H985.5 V57.7 M974.5 89.6 V84.6 H985.5 V89.6"/><rect x="974.5" y="68.7" width="11" height="10.1"/></g><g fill="none" stroke="#c8c8c8" stroke-width="1.6"><path d="M1034.5 58.4 H1066.8"/><rect x="1038.9" y="62.1" width="10.7" height="19.9"/></g><rect x="1053.9" y="61.3" width="9.4" height="12.2" fill="#c8c8c8"/><g fill="none" stroke="#c8c8c8" stroke-width="1.6"><path d="M1081 73.8 H1084.3 M1096.7 73.8 H1100.3 M1109.7 73.8 H1112.9"/><rect x="1085.1" y="63.8" width="10.8" height="19.8"/></g><rect x="1100.3" y="67.3" width="9.4" height="12.3" fill="#c8c8c8"/><g fill="none" stroke="#c8c8c8" stroke-width="1.6"><path d="M1126.6 89.1 H1158.9"/><rect x="1131.1" y="65.1" width="10.9" height="19.7"/></g><rect x="1146" y="73.8" width="9.4" height="11.8" fill="#c8c8c8"/><g fill="none" stroke="#c8c8c8" stroke-width="1.6"><path d="M1171.9 68.1 H1177.5 V79.1 H1171.9 M1205 68.1 H1199.3 V79.1 H1205"/><rect x="1183.2" y="68.9" width="10.5" height="10.2"/></g><g fill="#c8c8c8"><circle cx="1224.8" cy="78" r="1.5"/><circle cx="1230.8" cy="78" r="1.5"/><circle cx="1236.8" cy="78" r="1.5"/></g><g fill="none" stroke="#c8c8c8" stroke-width="3.2"><rect x="1284.9" y="59.2" width="28.8" height="28.8"/><path d="M1299.3 59.2 V88 M1284.9 73.6 H1313.7"/></g><g transform="translate(-4.9,54.4)" fill="#c8c8c8"><path d="M20.8 59 L38.1 74.7 L29.9 75.2 L34.6 86 L31.1 87.4 L26.4 76.8 L20.8 81.8Z"/><path d="M43.75 75 V88 M37.5 81.5 H50" stroke="#c8c8c8" stroke-width="1.6"/><path d="M43.75 73.6 L41.3 76.6 H46.2Z M43.75 89.3 L41.3 86.3 H46.2Z M36.3 81.5 L39.3 79.1 V83.9Z M51.2 81.5 L48.2 79.1 V83.9Z"/></g><path d="M54.4 139 L54.4 145.8 Q54.4 148.7 51.4 148.7 L44 148.7 Q50.3 147.2 52.4 144.6 Q53.9 142.6 54.4 139Z" fill="#c8c8c8"/><g fill="none" stroke="#c8c8c8" stroke-width="2.3"><path d="M15.6 173 V166.4 H22.6 M28 166.4 H33.5 M38.5 166.4 H45.1 V173 M45.1 176 V181 M45.1 183.5 V189.3 H38.5 M33.5 189.3 H28 M22.6 189.3 H15.6 V183.5 M15.6 181 V176"/></g><path d="M54.4 189 L54.4 195.8 Q54.4 198.7 51.4 198.7 L44 198.7 Q50.3 197.2 52.4 194.6 Q53.9 192.6 54.4 189Z" fill="#c8c8c8"/><ellipse cx="30.4" cy="225.9" rx="15.3" ry="9.6" fill="none" stroke="#c8c8c8" stroke-width="2"/><path d="M26.5 232 Q24 228 21.5 232 Q20 236 25 238 Q28 240 26 243.5" fill="none" stroke="#c8c8c8" stroke-width="2" stroke-linecap="round"/><path d="M54.4 238.8 L54.4 245.60000000000002 Q54.4 248.5 51.4 248.5 L44 248.5 Q50.3 247.0 52.4 244.4 Q53.9 242.4 54.4 238.8Z" fill="#c8c8c8"/><path d="M26.1 263.7 L27.3 270.7 L33.2 266.6 L29.1 272.5 L36.1 273.7 L29.1 274.9 L33.2 280.8 L27.3 276.7 L26.1 283.7 L24.9 276.7 L19.0 280.8 L23.1 274.9 L16.1 273.7 L23.1 272.5 L19.0 266.6 L24.9 270.7Z" fill="#c8c8c8"/><path d="M29.6 278 L45 293.4" stroke="#c8c8c8" stroke-width="2.4" stroke-linecap="round"/><path d="M54.4 289.8 L54.4 296.6 Q54.4 299.5 51.4 299.5 L44 299.5 Q50.3 298.0 52.4 295.40000000000003 Q53.9 293.40000000000003 54.4 289.8Z" fill="#c8c8c8"/><g fill="none" stroke="#c8c8c8" stroke-width="3.1"><path d="M22.6 313 V337.2 H46.7"/><path d="M14 321.2 H38.5 V345"/></g><path d="M54.4 340 L54.4 346.8 Q54.4 349.7 51.4 349.7 L44 349.7 Q50.3 348.2 52.4 345.6 Q53.9 343.6 54.4 340Z" fill="#c8c8c8"/><path d="M30.8 372.6 L17.5 386 Q15 388.5 16 391 L15 393 L17 394.5 L19 393.5 Q21.5 394.5 24 392 L37.3 378.6" fill="none" stroke="#c8c8c8" stroke-width="1.5"/><path d="M29.6 370.5 Q29 367.5 32 366.8 L35.5 366.6 L39.5 362.5 Q42.5 360.3 45 363 Q47.4 365.5 45.2 368.5 L41 372.5 L41 376 Q40.5 379 37.5 379.5 Z" fill="#c8c8c8"/><path d="M54.4 390.6 L54.4 397.40000000000003 Q54.4 400.3 51.4 400.3 L44 400.3 Q50.3 398.8 52.4 396.20000000000005 Q53.9 394.20000000000005 54.4 390.6Z" fill="#c8c8c8"/><g transform="rotate(42 30.4 430.2)"><rect x="15" y="423.5" width="31" height="13.5" rx="3" fill="none" stroke="#c8c8c8" stroke-width="2"/><path d="M26 423.5 V437 M35 423.5 V437 M28.2 424 V436.5 M30.5 424 V436.5 M32.8 424 V436.5" stroke="#c8c8c8" stroke-width="1.3"/></g><path d="M39.7 415.2 Q40.3 419.8 45 420.4 Q40.3 421 39.7 425.6 Q39.1 421 34.4 420.4 Q39.1 419.8 39.7 415.2Z" fill="#c8c8c8"/><path d="M54.4 441 L54.4 447.8 Q54.4 450.7 51.4 450.7 L44 450.7 Q50.3 449.2 52.4 446.6 Q53.9 444.6 54.4 441Z" fill="#c8c8c8"/><path d="M38.9 464.8 L46.7 470.6 L35.8 480.4 L31.9 476.8Z" fill="#c8c8c8"/><path d="M16.3 496.8 Q19.5 493 20.5 487 Q22 479.5 29.6 477.2 L37 482.7 Q37.5 490 32 494 Q27 496.5 16.3 496.8Z" fill="#c8c8c8"/><path d="M54.4 491.4 L54.4 498.2 Q54.4 501.09999999999997 51.4 501.09999999999997 L44 501.09999999999997 Q50.3 499.59999999999997 52.4 497.0 Q53.9 495.0 54.4 491.4Z" fill="#c8c8c8"/><path d="M25 515 H36 Q38.5 515 38.5 517.5 V527.3 L33.5 533 V535.6 H43 Q44.7 535.6 44.7 537.3 V541.7 Q44.7 543.4 43 543.4 H17.7 Q16 543.4 16 541.7 V537.3 Q16 535.6 17.7 535.6 H27.4 V533 L22.6 527.3 V517.5 Q22.6 515 25 515Z" fill="#c8c8c8"/><rect x="17.9" y="545.3" width="25.3" height="1.6" fill="#c8c8c8"/><path d="M36.6 568.7 L46.7 578.4 L31.8 593.5 L24.1 593.5 L17.9 587.4 Z" fill="none" stroke="#c8c8c8" stroke-width="2.4" stroke-linejoin="round"/><path d="M36.6 568.7 L46.7 578.4 L34.8 590.2 L24.7 580.5Z" fill="#c8c8c8"/><path d="M31.9 594.5 H43.2" stroke="#c8c8c8" stroke-width="1.8"/><path d="M54.4 592.9 L54.4 599.6999999999999 Q54.4 602.6 51.4 602.6 L44 602.6 Q50.3 601.1 52.4 598.5 Q53.9 596.5 54.4 592.9Z" fill="#c8c8c8"/><path d="M34.2 619.5 L46 635 Q47 637 45 639 L36 645.5 Q33.5 647 31.5 645 L20 630.5Z" fill="none" stroke="#c8c8c8" stroke-width="2.2" stroke-linejoin="round"/><path d="M27.8 629 Q33 632 39 629.5 Q43 627 40 624.5" fill="none" stroke="#c8c8c8" stroke-width="1.8"/><path d="M28 621.2 Q19 620 16 626 Q14.5 631 17.5 637 Q17.5 630 20.5 627.5 Q23 625.5 26 624.5Z" fill="#c8c8c8"/><path d="M54.4 643 L54.4 649.8 Q54.4 652.7 51.4 652.7 L44 652.7 Q50.3 651.2 52.4 648.6 Q53.9 646.6 54.4 643Z" fill="#c8c8c8"/><path d="M30.4 667.5 Q33 672 37 677 Q41.3 682.5 41.3 687.4 A10.9 10.9 0 0 1 19.5 687.4 Q19.5 682.5 23.8 677 Q27.8 672 30.4 667.5Z" fill="#c8c8c8"/><ellipse cx="25.3" cy="681.6" rx="1.5" ry="2.1" transform="rotate(25 25.3 681.6)" fill="#474747"/><path d="M54.4 693.7 L54.4 700.5 Q54.4 703.4000000000001 51.4 703.4000000000001 L44 703.4000000000001 Q50.3 701.9000000000001 52.4 699.3000000000001 Q53.9 697.3000000000001 54.4 693.7Z" fill="#c8c8c8"/><circle cx="36.1" cy="727.5" r="10.4" fill="#c8c8c8"/><path d="M28.8 735.6 L15.8 747.5" stroke="#c8c8c8" stroke-width="2.6" stroke-linecap="round"/><path d="M54.4 744 L54.4 750.8 Q54.4 753.7 51.4 753.7 L44 753.7 Q50.3 752.2 52.4 749.6 Q53.9 747.6 54.4 744Z" fill="#c8c8c8"/><path d="M16 768.7 H45.1 V775.3 H44.2 Q43.2 771.5 41 771.5 H33.5 V794.5 Q33.5 796.5 37 796.5 H38.5 V797.9 H22.4 V796.5 H24 Q27.5 796.5 27.5 794.5 V771.5 H20 Q17.8 771.5 16.9 775.3 H16Z" fill="#c8c8c8"/><path d="M54.4 794.5 L54.4 801.3 Q54.4 804.2 51.4 804.2 L44 804.2 Q50.3 802.7 52.4 800.1 Q53.9 798.1 54.4 794.5Z" fill="#c8c8c8"/><path d="M22.6 829.4 H30.4 L35 834.8 V841.8 L15.6 848.8Z" fill="#c8c8c8"/><path d="M31.1 827.4 L37.4 818.1 L46.7 826.7 L37.4 832.9Z" fill="#c8c8c8"/><path d="M16 848.5 L27.2 836.8" stroke="#474747" stroke-width="1"/><circle cx="27.2" cy="836.8" r="1.6" fill="#474747"/><path d="M54.4 845 L54.4 851.8 Q54.4 854.7 51.4 854.7 L44 854.7 Q50.3 853.2 52.4 850.6 Q53.9 848.6 54.4 845Z" fill="#c8c8c8"/><path d="M17 873 L32 886 L24.8 886.5 L29.7 898 L27.5 899 L22.7 887.6 L17 893Z" fill="none" stroke="#c8c8c8" stroke-width="1.7" stroke-linejoin="round"/><path d="M35 878.8 L36.2 888.5 L38.1 897.9 M44 879.2 Q37 883 36.5 888.5 Q38 893 45.9 895.5" fill="none" stroke="#c8c8c8" stroke-width="0.9"/><g fill="#c8c8c8"><rect x="33.5" y="877.3" width="3" height="3"/><rect x="34.7" y="887" width="3" height="3"/><rect x="36.6" y="896.4" width="3" height="3"/></g><path d="M54.4 895.6 L54.4 902.4 Q54.4 905.3000000000001 51.4 905.3000000000001 L44 905.3000000000001 Q50.3 903.8000000000001 52.4 901.2 Q53.9 899.2 54.4 895.6Z" fill="#c8c8c8"/><rect x="14.4" y="924.7" width="31.9" height="21.8" rx="3" fill="#c8c8c8"/><path d="M54.4 946.2 L54.4 953.0 Q54.4 955.9000000000001 51.4 955.9000000000001 L44 955.9000000000001 Q50.3 954.4000000000001 52.4 951.8000000000001 Q53.9 949.8000000000001 54.4 946.2Z" fill="#c8c8c8"/><path d="M25 1001 Q19.5 997 16.7 990.5 Q15.8 988.5 17.5 987.8 Q19 987.2 20.3 988.5 L23.5 991.7 V974.8 Q23.5 973.3 25.3 973.3 Q27 973.3 27 974.8 V983.5 H28.3 V971.8 Q28.3 970.3 30.2 970.3 Q32 970.3 32 971.8 V983.5 H33.3 V972.8 Q33.3 971.3 35.1 971.3 Q36.9 971.3 36.9 972.8 V984.5 H38 V975.8 Q38 974.3 39.8 974.3 Q41.6 974.3 41.6 975.8 V993 Q41.6 1001.8 32.5 1001.8 Q28 1001.8 25 1001Z" fill="#c8c8c8"/><path d="M54.4 996.8 L54.4 1003.5999999999999 Q54.4 1006.5 51.4 1006.5 L44 1006.5 Q50.3 1005.0 52.4 1002.4 Q53.9 1000.4 54.4 996.8Z" fill="#c8c8c8"/><circle cx="24.9" cy="1030.9" r="8.7" fill="none" stroke="#c8c8c8" stroke-width="3.4"/><path d="M31.5 1037.5 L44.5 1048.5" stroke="#c8c8c8" stroke-width="3" stroke-linecap="round"/><path d="M35.5 1041 L44 1048.3" stroke="#c8c8c8" stroke-width="5.2" stroke-linecap="round"/><path d="M9.3 1107.5 V1117 H19" fill="none" stroke="#a8a8a8" stroke-width="1.3"/><path d="M9.35 1102.3 L4.1 1108.1 H14.6Z M23.9 1117 L18.7 1112.2 V1122Z" fill="#a8a8a8"/><rect x="14" y="1136.1" width="32.7" height="23.4" fill="#c8c8c8"/><circle cx="30.3" cy="1147.8" r="7.5" fill="#474747"/><rect x="14" y="1177.6" width="32.7" height="19.2" rx="2" fill="#c8c8c8"/><g fill="#474747"><rect x="17.9" y="1181" width="3" height="2.6"/><rect x="22.7" y="1181" width="3" height="2.6"/><rect x="27.5" y="1181" width="3" height="2.6"/><rect x="32.3" y="1181" width="3" height="2.6"/><rect x="37.1" y="1181" width="3" height="2.6"/><rect x="41.9" y="1181" width="3" height="2.6"/><rect x="18.3" y="1185.6" width="3.6" height="2.6"/><rect x="23.9" y="1185.6" width="3.6" height="2.6"/><rect x="29.5" y="1185.6" width="3.6" height="2.6"/><rect x="35.1" y="1185.6" width="3.6" height="2.6"/><rect x="40.7" y="1185.6" width="3.6" height="2.6"/><rect x="24" y="1190.8" width="12.8" height="2.5"/></g><circle cx="1444" cy="144" r="14.3" fill="none" stroke="#c8c8c8" stroke-width="3.3"/><circle cx="1444" cy="137.6" r="2" fill="#c8c8c8"/><path d="M1444 142.5 V151" stroke="#c8c8c8" stroke-width="3.3" stroke-linecap="round"/><g stroke="#c8c8c8" stroke-width="3.4" stroke-linecap="round"><path d="M1429.8 186 H1437 M1442.5 186 H1458.2 M1429.8 195.3 H1449.5 M1455.5 195.3 H1458.2 M1429.8 204.6 H1441 M1446.5 204.6 H1458.2"/></g><g fill="#c8c8c8"><rect x="1437.2" y="182.2" width="3.8" height="7.8" rx="1"/><rect x="1450.9" y="191.5" width="3.8" height="7.8" rx="1"/><rect x="1441.8" y="200.8" width="3.8" height="7.8" rx="1"/></g><g stroke="#c8c8c8" stroke-width="1.5"><path d="M1428.5 245 H1442.3 M1428.5 249.8 H1442.3 M1428.5 254.5 H1442.3"/></g><g fill="#c8c8c8"><rect x="1432" y="242.8" width="1.8" height="4.4"/><rect x="1438" y="247.6" width="1.8" height="4.4"/><rect x="1433.5" y="252.3" width="1.8" height="4.4"/><path d="M1453.6 242.4 L1459.7 247.4 L1451.8 255.5 L1447.5 252Z"/><path d="M1429.6 274.7 Q1433 271 1434 265.5 Q1435.5 259.5 1446.8 253.5 L1450.5 256.7 Q1451 265 1446.5 270 Q1441 274.5 1429.6 274.7Z"/></g><text x="1427.5" y="338.9" font-family="Liberation Serif" font-size="47" fill="#c8c8c8" stroke="#c8c8c8" stroke-width="0.5" textLength="27.5" lengthAdjust="spacingAndGlyphs">T</text><text x="1446" y="338.9" font-family="Liberation Serif" font-size="36" fill="#c8c8c8" stroke="#c8c8c8" stroke-width="0.4" textLength="13" lengthAdjust="spacingAndGlyphs">t</text><path d="M1437 357 H1454.4 V362 H1450.6 V389 H1446 V362 H1443.5 V389 H1438.9 V374.5 H1437 Q1428 374.5 1428 365.8 Q1428 357 1437 357Z" fill="#c8c8c8"/><g fill="#c8c8c8"><path d="M1428 431 H1439 V434 H1431.5 V441 H1439 V444 H1428Z"/><path d="M1440.5 431 H1450 V434 H1444 V436 H1450 V444 H1440.5 V441 H1446.5 V439 H1440.5Z"/><path d="M1451 431 H1460.5 V434 H1454.5 V436 H1460.5 V444 H1451 V441 H1457 V439 H1451Z"/></g><rect x="1429" y="477" width="30" height="23" rx="2.5" fill="none" stroke="#c8c8c8" stroke-width="2.2"/><path d="M1429 500 V495 L1437 487 L1443 492.5 L1448 488 L1459 496 V500Z" fill="#c8c8c8"/><circle cx="1451.2" cy="483.2" r="3.5" fill="#c8c8c8"/><circle cx="1669.5" cy="1265" r="11.7" fill="#d0d0d0"/><circle cx="1718.8" cy="1262.5" r="9.8" fill="none" stroke="#c8c8c8" stroke-width="1.6"/><rect x="1751.3" y="1254.3" width="21.4" height="21.5" fill="none" stroke="#c8c8c8" stroke-width="1.8" stroke-dasharray="5 3.2" stroke-dashoffset="1"/><path d="M1792 1258 Q1803 1253 1812.5 1255" fill="none" stroke="#c8c8c8" stroke-width="1.2"/><ellipse cx="1802.5" cy="1264.8" rx="6.3" ry="9" fill="none" stroke="#c8c8c8" stroke-width="1.2"/><path d="M1792 1275 Q1803 1271 1812.5 1272" fill="none" stroke="#c8c8c8" stroke-width="1.2"/><g fill="#c8c8c8"><rect x="1790.2" y="1256" width="3.2" height="3.2"/><rect x="1810.9" y="1253.5" width="3.2" height="3.2"/><rect x="1800.2" y="1254.5" width="3" height="3"/><rect x="1790.2" y="1273.2" width="3.2" height="3.2"/><rect x="1810.9" y="1270.5" width="3.2" height="3.2"/><rect x="1801" y="1271.5" width="3" height="3"/></g><path d="M1831 1254.2 H1853.2 V1276 H1839.5 L1831 1267.5Z M1831 1267.5 H1839.5 V1276" fill="none" stroke="#c8c8c8" stroke-width="1.7" stroke-linejoin="round"/><path d="M1870.3 1257 Q1870.3 1252.6 1882.1 1252.6 Q1894 1252.6 1894 1257 L1890.5 1274.5 Q1889.5 1277 1882.1 1277 Q1874.8 1277 1873.8 1274.5Z" fill="#c8c8c8"/><ellipse cx="1882.1" cy="1257.3" rx="9.8" ry="2.6" fill="#474747"/><rect x="4.1" y="1069" width="32.1" height="32.7" rx="6.4" fill="#6e2320" stroke="#2a2a2a" stroke-width="1"/><rect x="24.5" y="1090" width="32.7" height="32.7" rx="6.4" fill="#ffffff" stroke="#2a2a2a" stroke-width="1"/><rect x="4.1" y="1069" width="32.1" height="32.7" rx="6.4" fill="#6e2320" stroke="#1e1e1e" stroke-width="1.2"/><rect x="37.6" y="1069.2" width="11.4" height="11.4" rx="2.5" fill="#000" stroke="#777" stroke-width="1"/><rect x="45.2" y="1076.8" width="11.8" height="11.8" rx="2.5" fill="#fff" stroke="#474747" stroke-width="0.8"/><path d="M212.5 118.4 L226 131.5 M226 118.4 L212.5 131.5" stroke="#d0d0d0" stroke-width="2.3"/><g stroke="#dcdcdc" stroke-width="1.7"><path d="M1885 133.1 H1894.3 M1885 135.6 H1894.3 M1885 138 H1894.3"/></g><g fill="none" stroke="#e0e0e0" stroke-width="1.8" stroke-linejoin="miter"><path d="M1440.5 104.2 L1434.5 107.5 L1440.5 110.8 M1445.5 104.2 L1451.5 107.5 L1445.5 110.8"/><path d="M1686 104.2 L1692 107.5 L1686 110.8 M1703.5 104.2 L1697.5 107.5 L1703.5 110.8"/></g><path d="M0 1272 Q0.5 1285 4 1285 H0Z" fill="#d8d8d8"/></svg><!--/UI-->
</body></html>
